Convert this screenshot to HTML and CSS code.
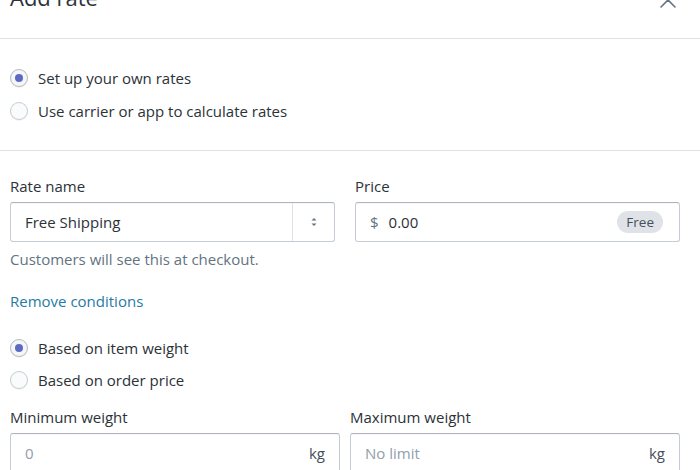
FILE: index.html
```html
<!DOCTYPE html>
<html lang="en">
<head>
    <meta charset="UTF-8">
    <meta name="viewport" content="width=device-width, initial-scale=1.0">
    <title>Add rate</title>
    <link rel="stylesheet" href="styles.css">
</head>
<body>

    <div class="modal">
        <div class="modal-header">
            <h2 class="modal-title">Add rate</h2>
            <button class="close-btn" aria-label="Close">
                <svg width="20" height="20" viewBox="0 0 20 20">
                    <path d="M3 3 L17 17 M17 3 L3 17" stroke="#637381" stroke-width="1.6" fill="none" stroke-linecap="round"/>
                </svg>
            </button>
        </div>

        <div class="section section-choice">
            <label class="radio-row">
                <span class="radio checked"></span>
                <span>Set up your own rates</span>
            </label>
            <label class="radio-row">
                <span class="radio"></span>
                <span>Use carrier or app to calculate rates</span>
            </label>
        </div>

        <div class="section section-rate">
            <div class="field-row">
                <div class="field field-name">
                    <div class="field-label">Rate name</div>
                    <div class="input select-input">
                        <span class="input-value">Free Shipping</span>
                        <span class="select-arrows">
                            <svg width="10" height="14" viewBox="0 0 10 14">
                                <path d="M2.5 5.5 L5 3 L7.5 5.5 Z" fill="#637381"/>
                                <path d="M2.5 8.5 L5 11 L7.5 8.5 Z" fill="#637381"/>
                            </svg>
                        </span>
                    </div>
                    <div class="help-text">Customers will see this at checkout.</div>
                </div>
                <div class="field field-price">
                    <div class="field-label">Price</div>
                    <div class="input">
                        <span class="prefix">$</span>
                        <span class="input-value">0.00</span>
                        <span class="badge">Free</span>
                    </div>
                </div>
            </div>

            <a class="link" href="#">Remove conditions</a>

            <div class="conditions">
                <label class="radio-row">
                    <span class="radio checked"></span>
                    <span>Based on item weight</span>
                </label>
                <label class="radio-row">
                    <span class="radio"></span>
                    <span>Based on order price</span>
                </label>
            </div>

            <div class="field-row weight-row">
                <div class="field">
                    <div class="field-label">Minimum weight</div>
                    <div class="input">
                        <span class="input-value placeholder">0</span>
                        <span class="suffix">kg</span>
                    </div>
                </div>
                <div class="field">
                    <div class="field-label">Maximum weight</div>
                    <div class="input">
                        <span class="input-value placeholder">No limit</span>
                        <span class="suffix">kg</span>
                    </div>
                </div>
            </div>
        </div>
    </div>

</body>
</html>
```

FILE: styles.css
```css
body {
    font-family: "Open Sans", "Noto Sans", sans-serif;
    font-size: 15px;
    color: #2b3238;
    background: #fff;
    margin: 0;
    overflow: hidden;
}
.modal {
    width: 700px;
}
.modal-header {
    display: flex;
    justify-content: space-between;
    align-items: flex-start;
    height: 51px;
    margin-top: -13px;
    padding: 0 20px 0 10px;
    border-bottom: 1px solid #dfe3e8;
}
.modal-title {
    margin: 0;
    margin-top: -2px;
    font-size: 22px;
    line-height: 24px;
    font-weight: 400;
    color: #2b3238;
}
.close-btn {
    border: none;
    background: none;
    padding: 0;
    margin: 3px 2px 0 0;
    width: 20px;
    height: 20px;
}
.section {
    padding: 0 20px 0 10px;
}
.section-choice {
    display: flex;
    flex-direction: column;
    gap: 13px;
    padding-top: 29px;
    padding-bottom: 29px;
    border-bottom: 1px solid #dfe3e8;
}
.radio-row {
    display: flex;
    align-items: center;
    gap: 10px;
    line-height: 20px;
}
.radio {
    width: 16px;
    height: 16px;
    border: 1px solid #c4cdd5;
    border-radius: 50%;
    background: #fafbfb;
    display: flex;
    align-items: center;
    justify-content: center;
    box-shadow: 0 1px 0 rgba(22,29,37,0.05);
}
.radio.checked {
    border-color: #b4bac0;
    background: #f4f6f8;
}
.radio.checked::after {
    content: "";
    width: 8px;
    height: 8px;
    border-radius: 50%;
    background: #5c6ac4;
}
.section-rate {
    padding-top: 25px;
}
.field-row {
    display: flex;
    gap: 20px;
}
.field {
    flex: 1;
}
.field-label {
    line-height: 20px;
    margin-bottom: 6px;
}
.input {
    display: flex;
    align-items: center;
    height: 38px;
    border: 1px solid #c4cdd5;
    border-top-color: #aeb4b9;
    border-radius: 3px;
    padding: 0 14px;
    box-shadow: inset 0 1px 0 rgba(99,115,129,0.05);
}
.input-value {
    flex: 1;
}
.placeholder {
    color: #919eab;
}
.prefix {
    color: #637381;
    margin-right: 10px;
}
.suffix {
    color: #454f5b;
}
.badge {
    background: #dfe3e8;
    color: #454f5b;
    border-radius: 11px;
    padding: 0 9px;
    line-height: 22px;
    font-size: 13.5px;
    margin-right: 2px;
}
.select-input {
    padding-right: 0;
}
.select-arrows {
    width: 41px;
    height: 38px;
    border-left: 1px solid #dfe3e8;
    display: flex;
    align-items: center;
    justify-content: center;
}
.help-text {
    color: #637381;
    line-height: 20px;
    margin-top: 7px;
}
.link {
    display: block;
    margin-top: 22px;
    line-height: 20px;
    color: #1f7ba3;
    text-decoration: none;
}
.conditions {
    display: flex;
    flex-direction: column;
    gap: 12px;
    margin-top: 27px;
}
.weight-row {
    gap: 10px;
    margin-top: 17px;
}
```
